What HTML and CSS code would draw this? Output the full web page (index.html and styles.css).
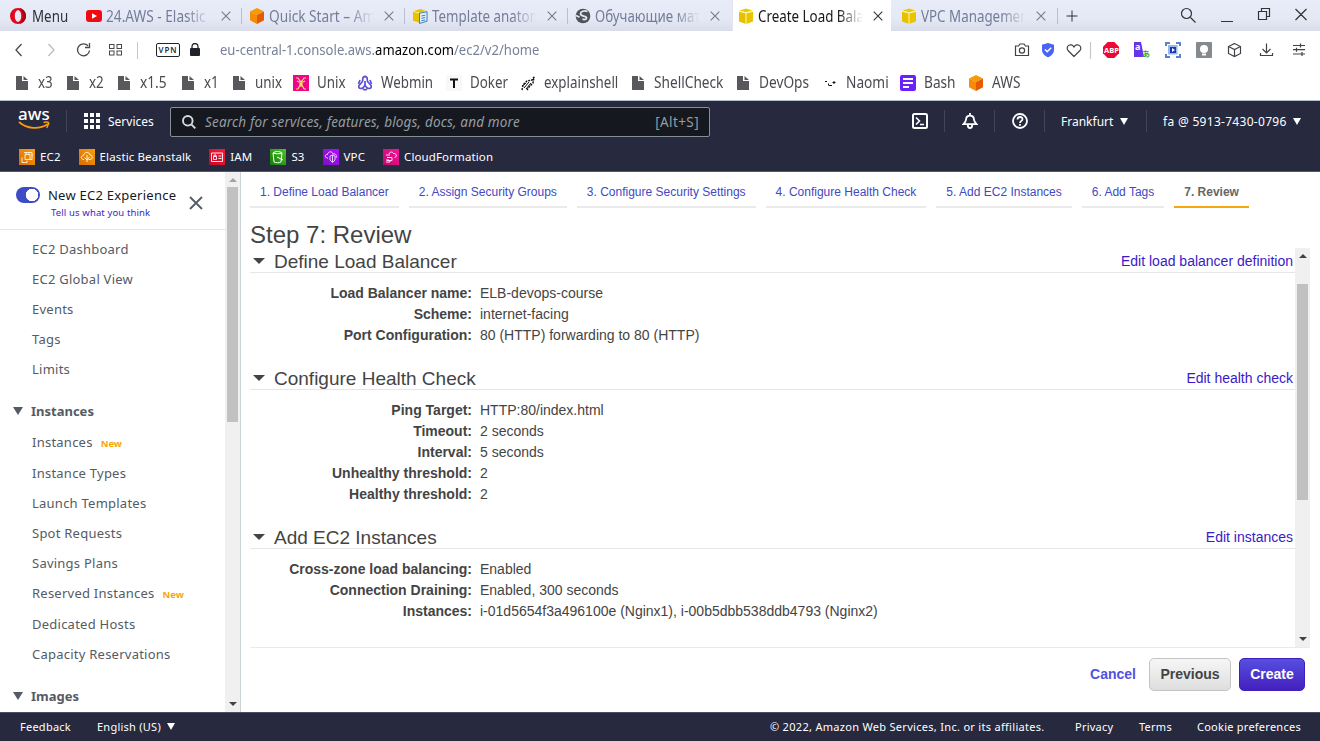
FILE: index.html
```html
<!DOCTYPE html>
<html lang="en">
<head>
<meta charset="utf-8">
<title>Create Load Balancer</title>
<link rel="stylesheet" href="styles.css">
</head>
<body>
<svg class="defs" width="0" height="0">
  <defs>
    <linearGradient id="orange" x1="0" y1="1" x2="1" y2="0"><stop offset="0" stop-color="#d86b08"/><stop offset="1" stop-color="#fb9f07"/></linearGradient>
    <linearGradient id="red" x1="0" y1="1" x2="1" y2="0"><stop offset="0" stop-color="#c00a26"/><stop offset="1" stop-color="#fb1a3c"/></linearGradient>
    <linearGradient id="green" x1="0" y1="1" x2="1" y2="0"><stop offset="0" stop-color="#127a0c"/><stop offset="1" stop-color="#4cc424"/></linearGradient>
    <linearGradient id="purple" x1="0" y1="1" x2="1" y2="0"><stop offset="0" stop-color="#7a10c8"/><stop offset="1" stop-color="#b00cff"/></linearGradient>
    <linearGradient id="pink" x1="0" y1="1" x2="1" y2="0"><stop offset="0" stop-color="#bc0a6c"/><stop offset="1" stop-color="#fb129c"/></linearGradient>
    <symbol id="file" viewBox="0 0 16 16"><path d="M2 1h6v5h6v9H2z M9.500 1L14 5H9.500z" fill="#58595d"/></symbol>
    <symbol id="cube" viewBox="0 0 16 16"><path d="M8 0l7 3.500-7 3.500-7-3.500z" fill="#f79a05"/><path d="M1 3.500l7 3.500v9l-7-3.700z" fill="#f58b06"/><path d="M15 3.500L8 7v9l7-3.700z" fill="#e35b05"/></symbol>
    <symbol id="box" viewBox="0 0 16 16"><path d="M1 3.300L8 5v11l-7-2.500z" fill="#e5c100"/><path d="M15 3.300L8 5v11l7-2.500z" fill="#e9c500"/><path d="M8 .5l6.500 2L8 4.300 1.500 2.500z" fill="#edc900"/><path d="M8 5v11M1 3.300L8 5l7-1.700" stroke="#fff6b0" fill="none"/></symbol>
    <symbol id="close" viewBox="0 0 10 10"><path d="M.7.7l8.600 8.600M9.300.7L.7 9.300" stroke="currentColor" stroke-width="1.100" fill="none"/></symbol>
    <symbol id="down" viewBox="0 0 10 8" preserveAspectRatio="none"><path d="M0 0h10L5 8z" fill="currentColor"/></symbol>
  </defs>
</svg>

<header class="tabbar">
  <div class="menu"><svg width="16" height="16" viewBox="0 0 16 16"><path fill-rule="evenodd" fill="#e3071b" d="M8 0a8 8 0 1 0 0 16A8 8 0 0 0 8 0zm0 2.200c2 0 3.200 2.600 3.200 5.800S10 13.800 8 13.800 4.800 11.200 4.800 8 6 2.200 8 2.200z"/><path d="M9 .1c4 .5 7 3.800 7 7.900s-3 7.400-7 7.900c2-1 4-4 4-7.900S11 1 9 .1z" fill="#a70014"/></svg><span class="ui dark">Menu</span></div>
  <div class="tabs">
    <div class="tab"><svg width="16" height="16" viewBox="0 0 16 16"><rect y="2" width="16" height="12" rx="3" fill="#f00a12"/><path d="M6 5.300v5.400l5-2.700z" fill="#fff"/></svg><span class="title"><span class="ui wide">24.AWS - Elastic</span></span><svg class="x"><use href="#close"/></svg></div>
    <div class="tab"><svg width="16" height="16"><use href="#cube"/></svg><span class="title"><span class="ui wide">Quick Start – Am</span></span><svg class="x"><use href="#close"/></svg></div>
    <div class="tab"><svg width="16" height="16" viewBox="0 0 17 16"><path d="M1 3l8-2.500 7 2.500v10l-7 2.500L1 13z" fill="#e7c300"/><path d="M1 3l7 2 8-2M8 5v10" stroke="#fff3a0" fill="none"/><path d="M8 5l8-1.500v10L8 16z" fill="#e3effa" stroke="#3478b8"/><path d="M10 8l4-.8M10 10.500l4-.8M10 13l4-.8" stroke="#2c76bd"/></svg><span class="title"><span class="ui">Template anatom</span></span><svg class="x"><use href="#close"/></svg></div>
    <div class="tab"><svg width="16" height="16" viewBox="0 0 16 16"><circle cx="8" cy="8" r="7.300" fill="#505259"/><path d="M12.500 3.500C9 2 5.500 3.500 5.500 5.800c0 3 6 1.700 6 4.200 0 1.500-2 2-4 1.200M1 7.500l3.500 1.800" fill="none" stroke="#e2e5f0" stroke-width="1.800"/></svg><span class="title"><span class="ui">Обучающие мат</span></span><svg class="x"><use href="#close"/></svg></div>
    <div class="tab active"><svg width="16" height="16"><use href="#box"/></svg><span class="title"><span class="ui">Create Load Bala</span></span><svg class="x"><use href="#close"/></svg></div>
    <div class="tab"><svg width="16" height="16"><use href="#box"/></svg><span class="title"><span class="ui">VPC Managemen</span></span><svg class="x"><use href="#close"/></svg></div>
  </div>
  <svg class="plus" width="12" height="12" viewBox="0 0 12 12"><path d="M6 .5v11M.5 6h11" stroke="#333" fill="none"/></svg>
  <svg class="window" width="130" height="20" viewBox="0 0 130 20" fill="none" stroke="#333" stroke-width="1.200"><circle cx="6.500" cy="7.500" r="5"/><path d="M10.500 11.500l5 5M41 15.500h12M78.500 5.500h8v8h-8zM81.500 5V2.500h8v8H87M115.500 3l11 11M126.500 3l-11 11"/></svg>
</header>

<div class="address">
  <svg width="125" height="20" viewBox="0 0 125 20" fill="none" stroke="#46484c" stroke-width="1.300"><path d="M7.500 4L2 10l5.500 6"/><path d="M34.500 4l5.500 6-5.500 6" stroke="#b9bbc0"/><path d="M74 5.800A6 6 0 1 0 75.500 10.500M75.500 3v4.500H71"/><g stroke-width="1"><rect x="95.500" y="4.500" width="4.500" height="4"/><rect x="103" y="4.500" width="4.500" height="4"/><rect x="95.500" y="11" width="4.500" height="4"/><rect x="103" y="11" width="4.500" height="4"/><path d="M123.500 2v17" stroke="#c5c7cc"/></g></svg>
  <span class="vpn">VPN</span>
  <svg class="lock" width="10" height="13" viewBox="0 0 10 13"><path d="M2 6V3.500a3 3 0 0 1 6 0V6" fill="none" stroke="#20222b" stroke-width="1.300"/><rect y="5" width="10" height="8" rx="1" fill="#20222b"/></svg>
  <span class="ui url">eu-central-1.console.aws.<b>amazon.com</b>/ec2/v2/home</span>
  <svg class="tools" width="296" height="22" viewBox="1012 39 296 22" fill="none" stroke="#3f4247" stroke-width="1.200">
    <path d="M1015.500 46h3l1.500-2h4l1.500 2h3v9.500h-13z"/><circle cx="1022" cy="50.500" r="2.600"/>
    <path d="M1048 43l6 1.800v5c0 3.500-2.500 6-6 7.500-3.500-1.500-6-4-6-7.500v-5z" fill="#4863f6" stroke="none"/><path d="M1045 49.500l2.200 2.200 4-4" stroke="#fff" stroke-width="1.600"/>
    <path d="M1074 56.500l-6-6c-3-4 3-8.500 6-3.500 3-5 9-.5 6 3.500z"/>
    <path d="M1090.500 42v17" stroke="#c5c7cc"/>
    <path d="M1107.700 42h6.600l4.700 4.700v6.600l-4.700 4.700h-6.600l-4.700-4.700v-6.600z" fill="#ed0636" stroke="none"/><text x="1104" y="53.300" class="abp">ABP</text>
    <path d="M1134 42h7l3 15h-10z" fill="#6734ee" stroke="none"/><text x="1135" y="50" class="tra">a</text><text x="1142" y="57" class="trb">あ</text>
    <rect x="1168" y="45" width="9.500" height="9.500" fill="#98b7ee" stroke="none"/><rect x="1170" y="47" width="6" height="6" fill="#173aad" stroke="none"/><path d="M1172 48v4l3-2z" fill="#fff" stroke="none"/><path d="M1166 46v-3h4M1176 43h4v3M1180 54v3h-4M1170 57h-4v-3" stroke="#5a83c7" stroke-width="2"/>
    <rect x="1196" y="42" width="16" height="16" rx="1" fill="#858a8f" stroke="none"/><circle cx="1204" cy="49" r="4" fill="#fff" stroke="none"/><path d="M1202 54.500h4" stroke="#fff" stroke-width="2"/>
    <path d="M1234.500 43.500l6 3v7l-6 3-6-3v-7zM1228.500 46.500l6 3 6-3M1234.500 49.500v7"/>
    <path d="M1266.500 43.500v9M1262.500 49l4 4 4-4M1260.500 53v2.500h12V53"/>
    <path d="M1293 45.500h12M1293 49.700h12M1293 54h12M1300.500 43.500v4M1296.500 47.700v4M1302 52v4"/>
  </svg>
</div>

<nav class="bookmarks">
  <a><svg><use href="#file"/></svg><span class="ui">x3</span></a>
  <a><svg><use href="#file"/></svg><span class="ui">x2</span></a>
  <a><svg><use href="#file"/></svg><span class="ui wide">x1.5</span></a>
  <a><svg><use href="#file"/></svg><span class="ui">x1</span></a>
  <a><svg><use href="#file"/></svg><span class="ui">unix</span></a>
  <a><svg viewBox="0 0 16 16"><path fill="#f0058a" d="M0 0h16v16H0z"/><path d="M3 3h2l2 3h2l2-3h2M4 6l2 1h4l2-1M7 7v3l-2 4M9 7v3l2 4M8 8v4M3 14h2M11 14h2" stroke="#f7dd6b" stroke-width="1.100" fill="none"/></svg><span class="ui">Unix</span></a>
  <a><svg viewBox="0 0 16 16"><g fill="none" stroke="#5b50d6" stroke-width="1.700"><path d="M6 2.500q2-2 4 0l.5 4 3.500 4q1 3-2 3-2 0-4-3-2 3-4 3-3 0-2-3l3.500-4z"/><path d="M3 5l-1.500 4M13 5l1.500 4M6 14q2 1.500 4 0M8 6v4"/></g></svg><span class="ui">Webmin</span></a>
  <a><svg viewBox="0 0 16 16"><path fill="#f8f8f8" d="M0 0h16v16H0z"/><path d="M4 4.500h8M8 4.500V13" stroke="#111" stroke-width="2"/></svg><span class="ui">Doker</span></a>
  <a><svg viewBox="0 0 16 16"><path d="M2 15l1-5 4-4 5-1 2-3-1 6-4 4-2 3" fill="none" stroke="#111" stroke-width="1.500" stroke-dasharray="2 1"/><path d="M4 13l5-6M6 14l5-6M2 11l4-3" stroke="#111"/></svg><span class="ui">explainshell</span></a>
  <a><svg><use href="#file"/></svg><span class="ui wide">ShellCheck</span></a>
  <a><svg><use href="#file"/></svg><span class="ui wide">DevOps</span></a>
  <a><svg viewBox="0 0 16 16"><path d="M3 6.500h2M7 10.500h3M10.500 7.500h3M12 6v3M4 9v0M6.500 8.500v2" stroke="#111"/></svg><span class="ui wide">Naomi</span></a>
  <a><svg viewBox="0 0 16 16"><rect width="16" height="16" rx="2" fill="#6a20fa"/><path d="M3 4h10M3 8h10M3 12h6" stroke="#fff" stroke-width="1.800"/></svg><span class="ui wide">Bash</span></a>
  <a><svg><use href="#cube"/></svg><span class="ui wide">AWS</span></a>
</nav>

<div class="awsnav">
  <div class="toprow">
    <div class="logo"><span>aws</span><svg width="32" height="9" viewBox="0 0 32 9"><path d="M1 1c8 7 20 8 29 2" fill="none" stroke="#f79b0c" stroke-width="1.800"/><path d="M25.500 1.500c4-1 6 0 5 1.500l-1.800 4" fill="none" stroke="#f79b0c" stroke-width="1.500"/></svg></div>
    <svg class="apps" width="16" height="16" viewBox="0 0 16 16" fill="#fff"><path d="M0 0h4v4H0zM6 0h4v4H6zM12 0h4v4h-4zM0 6h4v4H0zM6 6h4v4H6zM12 6h4v4h-4zM0 12h4v4H0zM6 12h4v4H6zM12 12h4v4h-4z"/></svg>
    <span class="services">Services</span>
    <div class="search"><svg width="14" height="14" viewBox="0 0 14 14" fill="none" stroke="#d5dbdb" stroke-width="1.900"><circle cx="5.800" cy="5.800" r="4.800"/><path d="M9.300 9.300L13.300 13.300"/></svg><i>Search for services, features, blogs, docs, and more</i><span>[Alt+S]</span></div>
    <div class="icons">
      <div><svg width="16" height="16" viewBox="0 0 16 16" fill="none" stroke="#fff" stroke-width="2"><rect x="1" y="1" width="14" height="14" rx="1.500"/><path d="M4 4.500L7.500 8 4 11.500M8 11.500h4" stroke-width="1.600"/></svg></div>
      <div><svg width="16" height="16" viewBox="0 0 16 16" fill="none" stroke="#fff" stroke-width="1.800"><path d="M8 0v2M1.500 11.200C4.200 9 4 7 4.300 5 5 1.700 11 1.700 11.700 5c.3 2 .1 4 2.800 6.200z"/><path d="M5.800 12c0 4 4.400 4 4.400 0"/></svg></div>
      <div><svg width="16" height="16" viewBox="0 0 16 16" fill="none" stroke="#fff" stroke-width="1.800"><circle cx="8" cy="8" r="7"/><path d="M5.500 6.500c0-3.300 5-3.300 5-.2C10.500 8 8 7.800 8 10M8 11v1.700"/></svg></div>
    </div>
    <div class="region">Frankfurt<svg class="caret"><use href="#down"/></svg></div>
    <div class="account">fa @ 5913-7430-0796<svg class="caret"><use href="#down"/></svg></div>
  </div>
  <div class="favs">
    <a><svg viewBox="0 0 16 16"><path fill="url(#orange)" d="M0 0h16v16H0z"/><path d="M6 5.500h5v5H6zM3 8.500v5h5v-2M5 3.500h8v7h-2M7 3v2M10 3v2M12 6h2" stroke="#fff4dd" fill="none" stroke-width=".9"/></svg>EC2</a>
    <a><svg viewBox="0 0 16 16"><path fill="url(#orange)" d="M0 0h16v16H0z"/><path d="M5 10.500c-4 0-3-4-.5-4 .5-4 6-4 6.500-.5 3 0 3 4.500 0 4.500H9.500M8 6v7M5.500 8.500L8 11l2.500-3" stroke="#fff4dd" fill="none"/></svg>Elastic Beanstalk</a>
    <a><svg viewBox="0 0 16 16"><path fill="url(#red)" d="M0 0h16v16H0z"/><path d="M2.500 4h11v8.500h-11zM4.500 7.500h3v3h-3zM5 7V6h2v1M9.500 7h3M9.500 9.500h3" stroke="#fff" fill="none" stroke-width=".9"/></svg>IAM</a>
    <a><svg viewBox="0 0 16 16"><path fill="url(#green)" d="M0 0h16v16H0z"/><path d="M3 4l1 9c2 1 5 1 7 0l1-9c-2 1-7 1-9 0zM3 4c2-2 7-2 9 0M7 8l6 3" stroke="#fff" fill="none"/></svg>S3</a>
    <a><svg viewBox="0 0 16 16"><path fill="url(#purple)" d="M0 0h16v16H0z"/><path d="M5 9H3.500C1 7 3 5 4.500 5.500 5 2 9.500 2 10 5c3-1 4 2 3 4M7 7l2.500-1L12 7v4l-2.500 2.500L7 11zM9.500 6v7" stroke="#f3daff" fill="none" stroke-width=".9"/></svg>VPC</a>
    <a><svg viewBox="0 0 16 16"><path fill="url(#pink)" d="M0 0h16v16H0z"/><path d="M6 5c1-3 4-2 4.500-.5 3-.5 4 3.500 1 4M3 6h4M4 8.500h5v3H4M3 13h4v-2M3 11h3" stroke="#ffdff0" fill="none"/></svg>CloudFormation</a>
  </div>
</div>

<main class="body">
  <aside class="sidebar">
    <div class="scroll-pane">
      <div class="exp">
        <span class="toggle"></span>
        <div class="exptext"><span>New EC2 Experience</span><a>Tell us what you think</a></div>
        <svg class="bigx" width="14" height="14" viewBox="0 0 14 14"><path d="M1 1l12 12M13 1L1 13" stroke="#545b64" stroke-width="1.800"/></svg>
      </div>
      <ul>
        <li>EC2 Dashboard</li><li>EC2 Global View</li><li>Events</li><li>Tags</li><li>Limits</li>
        <li class="head"><svg class="caret"><use href="#down"/></svg>Instances</li>
        <li class="tall">Instances<em>New</em></li><li>Instance Types</li><li>Launch Templates</li><li>Spot Requests</li><li>Savings Plans</li><li class="tall">Reserved Instances<em>New</em></li><li>Dedicated Hosts</li><li>Capacity Reservations</li>
        <li class="head"><svg class="caret"><use href="#down"/></svg>Images</li>
      </ul>
    </div>
    <div class="bar left"><i class="up pale"></i><b></b><i class="dn"></i></div>
  </aside>
  <section class="content">
    <div class="steps"><a>1. Define Load Balancer</a><a>2. Assign Security Groups</a><a>3. Configure Security Settings</a><a>4. Configure Health Check</a><a>5. Add EC2 Instances</a><a>6. Add Tags</a><a class="cur">7. Review</a></div>
    <h1>Step 7: Review</h1>
    <div class="review">
      <div class="sections">
        <h2><i class="tri"></i><span>Define Load Balancer</span><a>Edit load balancer definition</a></h2>
        <dl><dt>Load Balancer name:</dt><dd>ELB-devops-course</dd><dt>Scheme:</dt><dd>internet-facing</dd><dt>Port Configuration:</dt><dd>80 (HTTP) forwarding to 80 (HTTP)</dd></dl>
        <h2><i class="tri"></i><span>Configure Health Check</span><a>Edit health check</a></h2>
        <dl><dt>Ping Target:</dt><dd>HTTP:80/index.html</dd><dt>Timeout:</dt><dd>2 seconds</dd><dt>Interval:</dt><dd>5 seconds</dd><dt>Unhealthy threshold:</dt><dd>2</dd><dt>Healthy threshold:</dt><dd>2</dd></dl>
        <h2><i class="tri"></i><span>Add EC2 Instances</span><a>Edit instances</a></h2>
        <dl><dt>Cross-zone load balancing:</dt><dd>Enabled</dd><dt>Connection Draining:</dt><dd>Enabled, 300 seconds</dd><dt>Instances:</dt><dd>i-01d5654f3a496100e (Nginx1), i-00b5dbb538ddb4793 (Nginx2)</dd></dl>
      </div>
      <div class="bar right"><i class="up"></i><b></b><i class="dn"></i></div>
    </div>
    <div class="actions"><a>Cancel</a><button>Previous</button><button class="primary">Create</button></div>
  </section>
</main>

<footer class="footer">
  <span>Feedback</span><span class="lang">English (US)<svg class="caret"><use href="#down"/></svg></span>
  <span class="copy">© 2022, Amazon Web Services, Inc. or its affiliates.</span><span class="f1">Privacy</span><span class="f2">Terms</span><span class="f3">Cookie preferences</span>
</footer>
</body>
</html>
```
FILE: styles.css
```css
* { box-sizing: border-box; }
html, body { margin: 0; height: 741px; overflow: hidden; }
body { display: flex; flex-direction: column; width: 1320px; background: #fff; font-family: "Noto Sans", "Open Sans", sans-serif; font-size: 12px; }
svg { display: block; flex: none; }
.defs { position: absolute; }
.ui { display: inline-block; font: 16px/22px "Noto Sans", sans-serif; white-space: nowrap; transform: scaleX(.835); transform-origin: 0 50%; }
.ui.wide { transform: scaleX(.855); }
.caret { width: 8px; height: 7px; }

.tabbar { display: flex; align-items: center; height: 31px; flex: none; background: linear-gradient(#e8ecf8, #e5e9f5 60%, #d9dde9); }
.menu { display: flex; align-items: center; gap: 6px; width: 80px; padding-left: 10px; flex: none; }
.menu .ui { width: 36px; }
.dark { color: #303238; }
.tabs { display: flex; height: 31px; flex: none; }
.tab { display: flex; align-items: center; width: 163px; padding-left: 6px; color: #737d99; border-right: 4px solid transparent; }
.tab .title { width: 107px; margin-left: 4px; height: 24px; white-space: nowrap; mask-image: linear-gradient(90deg, #000 75%, transparent 98%); -webkit-mask-image: linear-gradient(90deg, #000 75%, transparent 98%); }
.tab .title .ui { width: 107px; margin-top: 1px; }
.tab .x { width: 10px; height: 10px; margin-left: 8px; color: #777a82; }
.tab:nth-child(-n+3) { background: linear-gradient(#b9bfcc, #b9bfcc) 161px 8px / 1px 16px no-repeat border-box; }
.tab.active { background: #fff; background-clip: padding-box; box-shadow: inset 1px 0 #e2e6f2; color: #16181d; }
.active .x { color: #333; }
.plus { margin-left: 8px; }
.tabs::after { content: ""; width: 1px; height: 16px; margin-top: 8px; margin-left: -1px; background: #b9bfcc; }
.window { margin-left: 102px; }

.address { display: flex; align-items: center; height: 37px; flex: none; padding-left: 14px; }
.vpn { width: 24px; height: 14px; margin-left: 17px; border: 1px solid #20222b; border-radius: 2px; font: 600 8px/12px "Open Sans", sans-serif; text-align: center; color: #20222b; letter-spacing: .9px; }
.lock { margin-left: 10px; }
.url { margin: -2px 0 0 20px; width: 760px; font-size: 15px; color: #76819a; }
.ui.url { transform: scaleX(.871); }
.url b { font-weight: normal; color: #000; }
.tools { margin-left: 32px; }
.abp { font: bold 7.500px "Open Sans", sans-serif; fill: #fff; stroke: none; }
.tra { font: bold 9px "Noto Sans", sans-serif; fill: #fff; stroke: none; }
.trb { font: bold 8px "Noto Sans CJK JP", sans-serif; fill: #35a83d; stroke: none; }

.bookmarks { display: grid; grid-template-columns: 51px 51px 64px 51px 62px 64px 89px 74px 110px 105px 87px 78px 68px 80px; height: 33px; flex: none; padding-left: 14px; border-bottom: 1px solid #b2c0d0; }
.bookmarks a { display: flex; align-items: center; gap: 8px; width: 0; padding-bottom: 3px; color: #494b50; }
.bookmarks svg { width: 16px; height: 16px; }
.bookmarks .ui { margin-top: -2px; }

.awsnav { height: 71px; flex: none; background: #27293f; border-bottom: 1px solid #555663; color: #fff; }
.toprow { display: flex; align-items: center; height: 40px; padding-left: 18px; }
.logo { width: 49px; height: 22px; border-right: 1px solid #414557; font: 500 17px/14px "Noto Sans", sans-serif; }
.logo span { display: block; height: 12px; margin-top: -2px; line-height: 12px; }
.logo svg { margin-top: 1px; }
.apps { margin-left: 17px; }
.services { width: 70px; padding-left: 8px; flex: none; }
.search { display: flex; align-items: center; width: 540px; height: 30px; margin-top: 1px; padding: 0 10px 0 11px; flex: none; background: #16181f; border: 1px solid #859095; border-radius: 2px; color: #949da2; font-size: 13.500px; letter-spacing: .18px; white-space: nowrap; }
.search i { margin-left: 9px; flex: 1; }
.search span { letter-spacing: .4px; }
.icons { display: flex; margin-left: 185px; }
.icons div { width: 50px; height: 22px; padding: 3px 0 0 17px; border-right: 1px solid #414557; }
.region, .account { display: flex; align-items: center; height: 22px; gap: 7px; padding-left: 16px; white-space: nowrap; }
.region { width: 102px; border-right: 1px solid #414557; }
.account { letter-spacing: .3px; gap: 6px; }
.favs { display: flex; height: 31px; padding-left: 19px; }
.favs a { display: flex; align-items: center; gap: 5px; margin-right: 18px; white-space: nowrap; font-size: 11.500px; letter-spacing: .12px; }
.favs svg { width: 16px; height: 16px; }

.body { display: flex; flex: none; height: 540px; }
.sidebar { display: flex; width: 241px; flex: none; border-right: 1px solid #cbd4d6; }
.scroll-pane { width: 225px; overflow: hidden; flex: none; }
.exp { display: flex; height: 58px; padding: 15px 0 0 16px; border-bottom: 1px solid #e3e4e6; }
.toggle { width: 24px; height: 16px; flex: none; border-radius: 8px; background: radial-gradient(circle at 16px 8px, #fff 6px, transparent 6.500px) #3d4bc5; }
.exptext { width: 133px; margin-left: 8px; white-space: nowrap; font-size: 13px; line-height: 16px; letter-spacing: .24px; color: #16191f; }
.exptext a { display: block; padding-left: 3px; font-size: 9.500px; line-height: 19px; letter-spacing: .13px; color: #3826c8; }
.bigx { margin: 9px 0 0 8px; }
.sidebar ul { margin: 0; padding: 4px 0 0 32px; list-style: none; }
.sidebar li { height: 30px; font-size: 13px; line-height: 30px; letter-spacing: .24px; color: #545b64; white-space: nowrap; }
.sidebar li.tall { height: 31px; line-height: 31px; }
.sidebar li.head { display: flex; align-items: center; gap: 8px; margin: 12px 0 0 -19px; font-weight: bold; letter-spacing: 0; }
.sidebar li.head + li { margin-top: 1px; }
.head .caret { width: 10px; height: 8px; }
.sidebar em { margin-left: 8px; font: bold 9.500px "Noto Sans", sans-serif; letter-spacing: 0; color: #f5a70c; }
.sidebar li.tall:first-of-type em { margin-left: 7px; }
.bar { display: flex; flex-direction: column; align-items: center; background: #f0f0f0; }
.bar i { width: 0; height: 0; border: 4px solid transparent; }
.bar .up { border-top: 0; border-bottom-color: #424242; }
.bar .pale { border-bottom-color: #a3a3a3; }
.bar .dn { border-bottom: 0; border-top-color: #424242; }
.bar b { background: #c1c1c1; }
.left { width: 15px; }
.left .up { margin-top: 6px; }
.left b { width: 11px; height: 235px; margin-top: 5px; }
.left .dn { margin: auto 0 6px; }

.content { flex: 1; padding: 0 10px 0 9px; font-family: "Liberation Sans", Arial, sans-serif; color: #444; }
.steps { display: flex; gap: 10px; }
.steps a { height: 36px; padding: 0 10px; font-size: 12px; line-height: 40px; color: #4149c3; border-bottom: 2px solid #eaeaea; white-space: nowrap; }
.steps .cur { font-weight: bold; color: #666; border-color: #f5a70c; }
h1 { height: 40px; margin: 0; font-size: 24px; font-weight: normal; line-height: 54px; }
.review { display: flex; height: 400px; border-bottom: 1px solid #eaeaea; }
.sections { flex: 1; overflow: hidden; }
h2 { display: flex; align-items: center; height: 25px; margin: 0; padding: 2px 2px 0 4px; font-size: 19px; font-weight: normal; border-bottom: 1px solid #e6e6e6; }
h2 span { padding-top: 1px; }
h2 .tri { width: 0; height: 0; margin: 0 8px 0 -1px; border: 6px solid transparent; border-top-color: #444; border-bottom: 0; }
h2 .tri + span { padding-left: 1px; }
h2 a { margin-left: auto; font-size: 14px; color: #3a1ac6; }
dl { display: grid; grid-template-columns: 222px 1fr; column-gap: 8px; margin: 10px 0 19px; font-size: 14px; line-height: 21px; }
dt { text-align: right; font-weight: bold; }
dd { margin: 0; }
.right { width: 15px; }
.right .up { margin-top: 6px; }
.right b { width: 11px; height: 216px; margin-top: 26px; }
.right .dn { margin: auto 0 6px; }
.actions { display: flex; align-items: center; justify-content: flex-end; padding: 10px 5px 0 0; font-size: 14px; font-weight: bold; }
.actions a { margin-right: 13px; padding-bottom: 2px; color: #5351e0; }
.actions button { width: 82px; height: 33px; padding: 0 0 2px; border: 1px solid #c4c4c4; border-radius: 5px; background: linear-gradient(#f6f6f6, #dedede); font: bold 14px "Liberation Sans", Arial, sans-serif; color: #444; }
.actions .primary { width: 66px; margin-left: 8px; border-color: #3d20bd; background: linear-gradient(#574fe0, #441fbd); color: #fff; }

.footer { display: flex; align-items: center; height: 29px; flex: none; padding: 0 0 2px 20px; background: #27293f; border-top: 1px solid #4b4d5c; color: #fff; font-size: 11px; letter-spacing: .25px; white-space: nowrap; }
.footer span { flex: none; width: 77px; }
.footer .lang { display: flex; align-items: center; gap: 6px; width: 673px; }
.footer .copy { width: 305px; letter-spacing: .3px; }
.footer .f1 { width: 64px; }
.footer .f2 { width: 58px; }
.footer .f3 { width: 110px; }
```
